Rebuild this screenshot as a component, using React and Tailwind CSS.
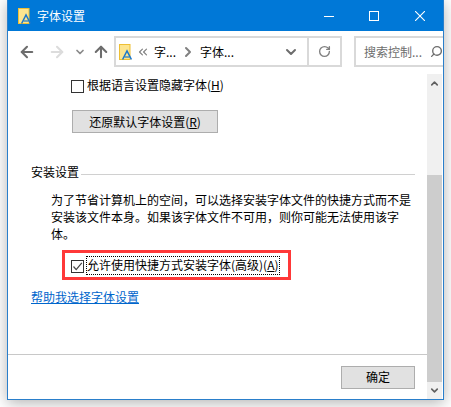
import React from 'react';
import { ArrowLeft, ArrowRight, ArrowUp, ChevronDown, ChevronRight, ChevronUp, ChevronsLeft, RotateCw, Search } from 'lucide-react';

const FontIcon = ({ className }) => (
  <svg className={className} viewBox="0 0 13 16">
    <rect x="0.5" y="0.5" width="10.5" height="15" fill="#fde58f" stroke="#eebf35" />
    <path d="M3.6 15.5 L8 7 L12.4 15.5" fill="none" stroke="#1c78cc" strokeWidth="1.5" />
    <path d="M5.5 13 H10.5" stroke="#1c78cc" strokeWidth="1.2" />
  </svg>
);

const Underlined = ({ children }) => <span className="underline">{children}</span>;

const App = () => {
  return (
    <div className="w-[451px] h-[407px] overflow-hidden bg-white text-[12px] leading-[17px] text-black font-['Noto_Sans_CJK_SC','Noto_Sans',sans-serif]">
      <div className="ml-[7px] w-[437px] h-[400px] flex flex-col border border-t-0 border-[#2a7fcb] bg-white shadow-[0_3px_14px_rgba(0,0,0,0.3)]">
        {/* title bar */}
        <div className="h-[31px] shrink-0 bg-[#0078d7] flex items-center text-white">
          <FontIcon className="ml-[10px] w-[13px] h-[16px]" />
          <span className="ml-[6px]">字体设置</span>
          <div className="ml-auto mr-[18px] flex items-center gap-[35px]">
            <svg className="w-[10px] h-[10px]" viewBox="0 0 10 10" shapeRendering="crispEdges">
              <path d="M0 5.5 H10" stroke="white" />
            </svg>
            <svg className="w-[10px] h-[10px]" viewBox="0 0 10 10" shapeRendering="crispEdges">
              <rect x="0.5" y="0.5" width="9" height="9" fill="none" stroke="white" />
            </svg>
            <svg className="ml-px w-[10px] h-[10px]" viewBox="0 0 10 10">
              <path d="M0 0 L10 10 M10 0 L0 10" stroke="white" strokeWidth="1.1" />
            </svg>
          </div>
        </div>

        {/* nav bar */}
        <div className="h-[41px] shrink-0 flex items-center">
          <ArrowLeft className="ml-[10px] w-[18px] h-[18px] text-[#6d6d6d]" strokeWidth={2.75} />
          <ArrowRight className="ml-[12px] w-[18px] h-[18px] text-[#dcdcdc]" strokeWidth={2.75} />
          <ChevronDown className="ml-[8px] w-[12px] h-[12px] text-[#8a8a8a]" strokeWidth={3.5} />
          <ArrowUp className="ml-[6px] w-[18px] h-[18px] text-[#6d6d6d]" strokeWidth={2.75} />
          <div className="ml-[4px] w-[228px] h-[31px] flex items-center border-2 border-[#d9d9d9]">
            <FontIcon className="ml-[3px] w-[13px] h-[16px]" />
            <ChevronsLeft className="ml-[4px] w-[14px] h-[14px] text-[#808080]" strokeWidth={2} />
            <span className="ml-[4px]">字...</span>
            <ChevronRight className="ml-[4px] w-[16px] h-[16px] text-[#808080]" strokeWidth={3} />
            <span className="ml-[4px]">字体...</span>
            <ChevronDown className="ml-auto mr-[8px] w-[16px] h-[16px] text-[#6d6d6d]" strokeWidth={3} />
            <div className="w-[2px] h-full bg-[#d9d9d9]" />
            <RotateCw className="ml-[9px] mr-[9px] w-[13px] h-[13px] text-[#808080]" strokeWidth={2.5} />
          </div>
          <div className="ml-[12px] flex-1 h-[31px] flex items-center border-2 border-r-0 border-[#d9d9d9] pl-[8px] text-[#6d6d6d]">
            <span>搜索控制...</span>
            <Search className="ml-auto w-[13px] h-[13px] -scale-x-100 text-[#6d6d6d]" strokeWidth={2.5} />
          </div>
        </div>

        <div className="flex-1 flex min-h-0">
          <div className="flex-1 flex flex-col min-w-0">
            <div className="flex-1 pt-[7px]">
              <div className="ml-[63px] flex items-center h-[15px]">
                <span className="w-[13px] h-[13px] border border-[#333333]" />
                <span className="ml-[3px] mb-[4px]">根据语言设置隐藏字体(<Underlined>H</Underlined>)</span>
              </div>
              <button className="ml-[64px] mt-[16px] w-[146px] h-[23px] flex items-center justify-center bg-[#e1e1e1] border border-[#adadad] leading-none">
                还原默认字体设置(<Underlined>R</Underlined>)
              </button>

              <div className="ml-[23px] mt-[30px] w-[384px] flex items-center">
                <span>安装设置</span>
                <span className="ml-[2px] mt-[6px] flex-1 h-px bg-[#d0d0d0]" />
              </div>

              <p className="ml-[43px] mt-[11px] w-[364px]">
                为了节省计算机上的空间，可以选择安装字体文件的快捷方式而不是安装该文件本身。如果该字体文件不可用，则你可能无法使用该字体。
              </p>

              <div className="ml-[54px] mt-[8px] w-[229px] h-[30px] border-[3px] border-[#ff3838] flex items-center">
                <span className="ml-[6px] mt-[2px] w-[13px] h-[13px] flex items-center justify-center border border-[#333333]">
                  <svg className="w-[11px] h-[11px]" viewBox="0 0 11 11">
                    <path d="M1.5 5.5 L4.2 8.6 L9.8 1.8" fill="none" stroke="#444444" strokeWidth="1.2" />
                  </svg>
                </span>
                <span className="ml-[2px] h-[19px] w-[194px] flex items-center whitespace-nowrap border border-dotted border-black pb-[2px]">
                  允许使用快捷方式安装字体(高级)(<Underlined>A</Underlined>)
                </span>
              </div>

              <a href="#" className="block ml-[23px] mt-[8px] w-fit text-[#0066cc] underline">帮助我选择字体设置</a>
            </div>

            {/* footer */}
            <div className="h-[45px] shrink-0 border-t border-[#c8c8c8] flex items-center justify-end">
              <button className="mr-[12px] w-[74px] h-[23px] flex items-center justify-center bg-[#e1e1e1] border border-[#adadad] leading-none">
                确定
              </button>
            </div>
          </div>

          {/* scrollbar */}
          <div className="w-[15px] mt-[2px] mr-px shrink-0 flex flex-col bg-[#f0f0f0]">
            <div className="h-[101px] flex justify-center pt-[4px]">
              <ChevronUp className="w-[11px] h-[11px] text-[#606060]" strokeWidth={3.5} />
            </div>
            <div className="flex-1 bg-[#cdcdcd]" />
            <div className="h-[17px] flex items-center justify-center">
              <ChevronDown className="w-[11px] h-[11px] text-[#606060]" strokeWidth={3.5} />
            </div>
          </div>
        </div>
      </div>
    </div>
  );
};

export default App;
